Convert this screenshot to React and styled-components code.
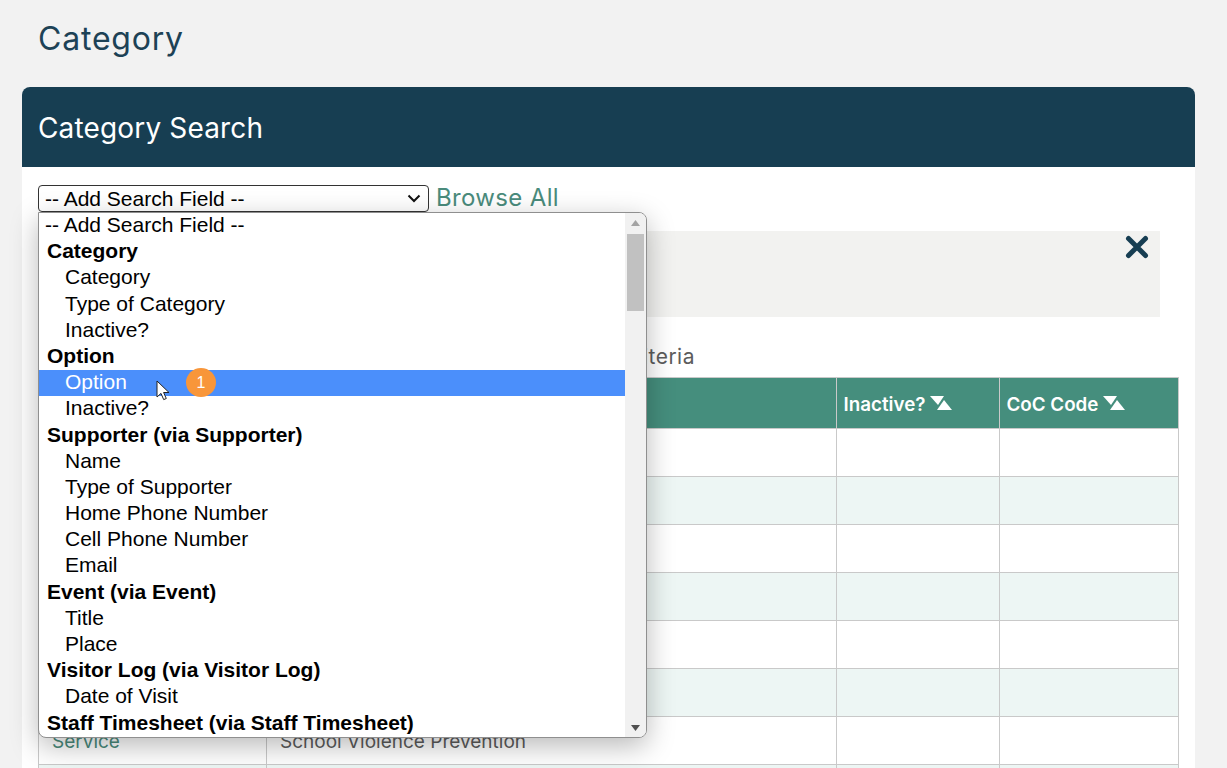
import styled, { createGlobalStyle } from "styled-components";

const GlobalStyle = createGlobalStyle`
  html, body {
    margin: 0;
    height: 768px;
    overflow: hidden;
    background: #f2f2f2;
  }
  * { box-sizing: border-box; }
`;

const Page = styled.div`
  padding: 0 32px 0 22px;
  font-family: Inter, Roboto, "Liberation Sans", sans-serif;
`;

const PageTitle = styled.h1`
  margin: 0;
  height: 87px;
  padding: 18px 0 0 16px;
  font-size: 32px;
  line-height: 42px;
  font-weight: 400;
  letter-spacing: 0.8px;
  color: #1d4256;
`;

const Card = styled.section`
  background: #fff;
  border-radius: 8px 8px 0 0;
`;

const CardHeader = styled.header`
  display: flex;
  align-items: center;
  height: 80px;
  padding: 2px 0 0 16px;
  background: #173e52;
  border-radius: 8px 8px 0 0;
  color: #fff;
  font-size: 28px;
  letter-spacing: 0.15px;
`;

const CardBody = styled.div`
  padding: 18px 16px 0;
`;

const SearchRow = styled.div`
  position: relative;
  display: flex;
  align-items: center;
  gap: 7px;
  height: 27px;
`;

const SelectWrap = styled.div`
  position: relative;
  width: 391px;
  height: 27px;
`;

const FieldSelect = styled.select`
  appearance: none;
  display: block;
  width: 100%;
  height: 27px;
  padding: 0 6px;
  font-family: "Liberation Sans", Arial, sans-serif;
  font-size: 21px;
  color: #000;
  background: #fff;
  border: 1px solid #333;
  border-radius: 4px;
`;

const SelectChevron = styled.svg`
  position: absolute;
  top: 9px;
  right: 8px;
  pointer-events: none;
`;

const BrowseLink = styled.a`
  padding-bottom: 2px;
  font-size: 24px;
  letter-spacing: 0.35px;
  line-height: 27px;
  color: #4a8b7c;
`;

const Dropdown = styled.div`
  position: absolute;
  top: 27px;
  left: 0;
  z-index: 5;
  display: flex;
  width: 609px;
  height: 526px;
  background: #fff;
  border: 1px solid #8f8f8f;
  border-radius: 0 8px 8px 8px;
  box-shadow: 0 8px 28px rgba(0, 0, 0, 0.28);
  overflow: hidden;
  font-family: "Liberation Sans", Arial, sans-serif;
  font-size: 21px;
  color: #000;
`;

const OptionList = styled.ul`
  flex: 1;
  margin: 0;
  padding: 0;
  list-style: none;
`;

const OptionRow = styled.li`
  position: relative;
  height: 26.2px;
  line-height: 23px;
  white-space: nowrap;
  padding-left: ${(p) => (p.$group ? "8px" : p.$blank ? "6px" : "26px")};
  font-weight: ${(p) => (p.$group ? 700 : 400)};
  background: ${(p) => (p.$active ? "#4b8ffb" : "transparent")};
  color: ${(p) => (p.$active ? "#fff" : "#000")};
`;

const StepBadge = styled.span`
  position: absolute;
  top: -2px;
  left: 147px;
  width: 30px;
  height: 29px;
  border-radius: 50%;
  background: #f8963a;
  color: #fff;
  font-size: 16px;
  line-height: 29px;
  text-align: center;
`;

const Pointer = styled.svg`
  position: absolute;
  top: 10px;
  left: 117px;
`;

const ScrollTrack = styled.div`
  position: relative;
  flex: none;
  width: 21px;
  background: #f1f1f1;
`;

const ScrollThumb = styled.div`
  position: absolute;
  top: 21px;
  left: 2px;
  width: 17px;
  height: 77px;
  background: #c1c1c1;
`;

const ScrollArrow = styled.svg`
  position: absolute;
  left: 6px;
  ${(p) => (p.$down ? "bottom: 6px;" : "top: 7px;")}
`;

const FilterPanel = styled.div`
  display: flex;
  justify-content: flex-end;
  width: 1122px;
  height: 86px;
  margin-top: 19px;
  padding: 4px 11px 0 0;
  background: #f2f2f0;
`;

const CloseButton = styled.svg`
  display: block;
  color: #173e52;
`;

const ResultNote = styled.p`
  width: 657px;
  height: 26px;
  margin: 27px 0 7px;
  font-size: 21px;
  line-height: 26px;
  letter-spacing: 0.5px;
  text-align: right;
  white-space: nowrap;
  color: #5c5c5c;
`;

const ResultTable = styled.table`
  width: 1140px;
  table-layout: fixed;
  border-collapse: collapse;
  font-size: 19px;
`;

const HeadCell = styled.th`
  width: ${(p) => p.$width}px;
  height: 51px;
  padding: 2px 7px 0 6.5px;
  border: 1px solid #c9c9c9;
  background: #458e7d;
  color: #fff;
  font-size: 18.8px;
  font-weight: 600;
  text-align: left;
`;

const SortIcon = styled.svg`
  margin-left: 5px;
  vertical-align: 0;
`;

const BodyRow = styled.tr`
  height: 48px;
  background: ${(p) => (p.$odd ? "#edf6f4" : "#fff")};
`;

const BodyCell = styled.td`
  padding: 2px 13px 0;
  border: 1px solid #c9c9c9;
  color: ${(p) => (p.$link ? "#4a8b7c" : "#5c5c5c")};
`;

const options = [
  { label: "-- Add Search Field --", blank: true },
  { label: "Category", group: true },
  { label: "Category" },
  { label: "Type of Category" },
  { label: "Inactive?" },
  { label: "Option", group: true },
  { label: "Option", active: true },
  { label: "Inactive?" },
  { label: "Supporter (via Supporter)", group: true },
  { label: "Name" },
  { label: "Type of Supporter" },
  { label: "Home Phone Number" },
  { label: "Cell Phone Number" },
  { label: "Email" },
  { label: "Event (via Event)", group: true },
  { label: "Title" },
  { label: "Place" },
  { label: "Visitor Log (via Visitor Log)", group: true },
  { label: "Date of Visit" },
  { label: "Staff Timesheet (via Staff Timesheet)", group: true },
];

const rows = [
  ["", ""],
  ["", ""],
  ["", ""],
  ["", ""],
  ["", ""],
  ["", ""],
  ["Service", "School Violence Prevention"],
  ["", ""],
];

const SortArrows = () => (
  <SortIcon width="23" height="15" viewBox="0 0 23 15">
    <path d="M0 0h14l-6 9z" fill="#fff" />
    <path d="M14 4l8 10H7z" fill="#fff" />
  </SortIcon>
);

const App = () => {
  return (
    <Page>
      <GlobalStyle />
      <PageTitle>Category</PageTitle>
      <Card>
        <CardHeader>Category Search</CardHeader>
        <CardBody>
          <SearchRow>
            <SelectWrap>
              <FieldSelect defaultValue="">
                <option value="">-- Add Search Field --</option>
              </FieldSelect>
              <SelectChevron width="14" height="9" viewBox="0 0 14 9">
                <path d="M1.5 1.5L7 7l5.5-5.5" fill="none" stroke="#111" strokeWidth="2" />
              </SelectChevron>
            </SelectWrap>
            <BrowseLink>Browse All</BrowseLink>
            <Dropdown>
              <OptionList>
                {options.map((o, i) => (
                  <OptionRow key={i} $group={o.group} $blank={o.blank} $active={o.active}>
                    {o.label}
                    {o.active && (
                      <>
                        <Pointer width="14" height="21" viewBox="0 0 14 21">
                          <path
                            d="M1 1v16l4-3.6 2.7 6.2 2.6-1.1-2.7-6H13z"
                            fill="#fff"
                            stroke="#222"
                            strokeWidth="1"
                          />
                        </Pointer>
                        <StepBadge>1</StepBadge>
                      </>
                    )}
                  </OptionRow>
                ))}
              </OptionList>
              <ScrollTrack>
                <ScrollArrow width="9" height="6" viewBox="0 0 9 6">
                  <path d="M4.5 0L9 6H0z" fill="#a3a3a3" />
                </ScrollArrow>
                <ScrollThumb />
                <ScrollArrow $down width="9" height="6" viewBox="0 0 9 6">
                  <path d="M0 0h9L4.5 6z" fill="#505050" />
                </ScrollArrow>
              </ScrollTrack>
            </Dropdown>
          </SearchRow>
          <FilterPanel>
            <CloseButton width="24" height="24" viewBox="0 0 24 24">
              <path
                d="M3.5 3.5l17 17M20.5 3.5l-17 17"
                fill="none"
                stroke="currentColor"
                strokeWidth="5"
                strokeLinecap="round"
              />
            </CloseButton>
          </FilterPanel>
          <ResultNote>Search Criteria</ResultNote>
          <ResultTable>
            <thead>
              <tr>
                <HeadCell $width={228} />
                <HeadCell $width={570} />
                <HeadCell $width={163}>
                  Inactive?
                  <SortArrows />
                </HeadCell>
                <HeadCell $width={179}>
                  CoC Code
                  <SortArrows />
                </HeadCell>
              </tr>
            </thead>
            <tbody>
              {rows.map((r, i) => (
                <BodyRow key={i} $odd={i % 2 === 1}>
                  <BodyCell $link>{r[0]}</BodyCell>
                  <BodyCell>{r[1]}</BodyCell>
                  <BodyCell />
                  <BodyCell />
                </BodyRow>
              ))}
            </tbody>
          </ResultTable>
        </CardBody>
      </Card>
    </Page>
  );
};

export default App;
